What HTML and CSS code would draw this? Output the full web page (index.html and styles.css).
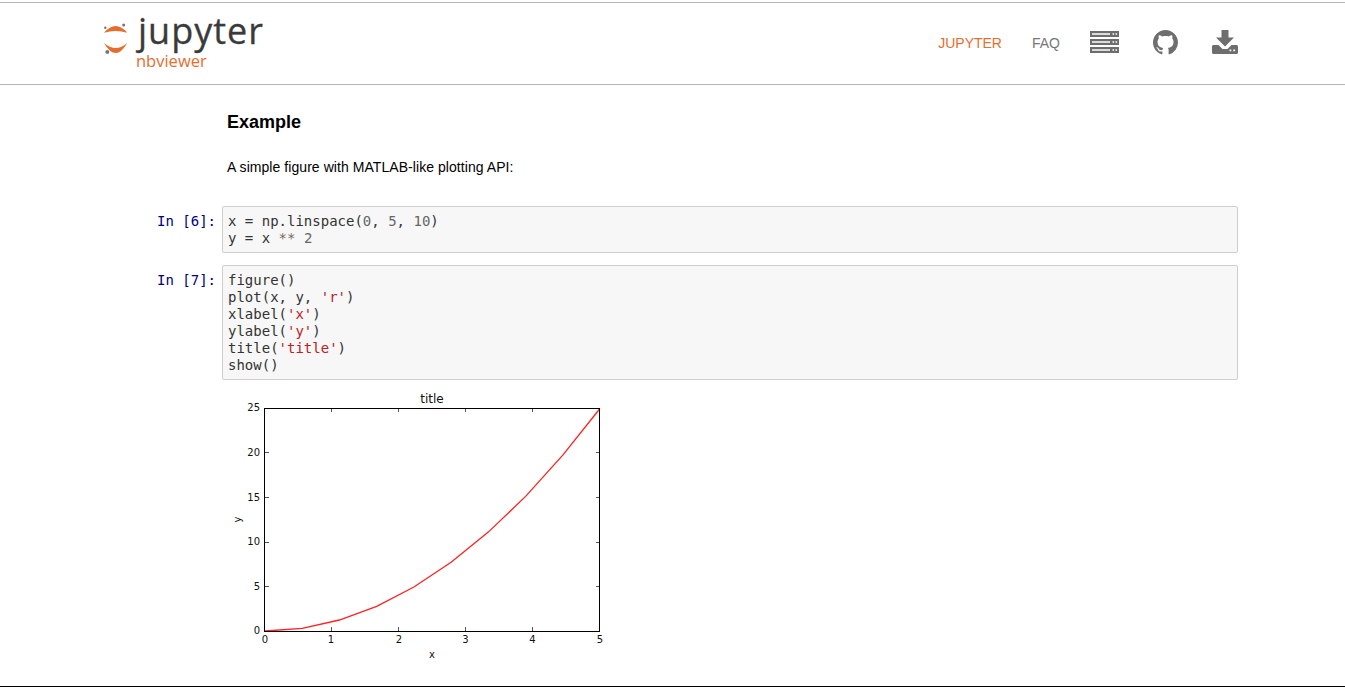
FILE: index.html
```html
<!DOCTYPE html>
<html lang="en">
<head>
<meta charset="utf-8">
<title>Example</title>
<link rel="stylesheet" href="styles.css">
</head>
<body>
<div class="topline"></div>
<header class="navbar">
  <a class="brand">
    <svg class="brand-mark" width="26" height="36" viewBox="0 0 26 36">
      <path d="M1 11.700 Q12.650 -1.700 24.300 11.700 Q12.650 8.300 1 11.700Z" fill="#e46e2e"/>
      <path d="M1 22 Q12.650 42 24.300 22 Q12.650 32 1 22Z" fill="#e46e2e"/>
      <circle cx="20.700" cy="4" r="1.500" fill="#767677"/>
      <circle cx="2.300" cy="6.700" r="1.200" fill="#767677"/>
      <circle cx="4.300" cy="31" r="2" fill="#767677"/>
    </svg>
    <span class="brand-text">
      <span class="brand-name">jupyter</span>
      <span class="brand-sub">nbviewer</span>
    </span>
  </a>
  <nav class="nav">
    <a class="nav-link active">JUPYTER</a>
    <a class="nav-link">FAQ</a>
    <svg class="nav-icon" width="29" height="22" viewBox="0 0 29 22"><path fill="#6e6e6e" d="M0 0h29v6H0zM0 8h29v6H0zM0 16h29v6H0z"/><path fill="#fff" d="M2 2.300h18v1.500H2zM2 10.300h18v1.500H2zM2 18.300h18v1.500H2zM22.500 2.300h1.600v1.500h-1.600zM25.500 2.300h1.600v1.500h-1.600zM22.500 10.300h1.600v1.500h-1.600zM25.500 10.300h1.600v1.500h-1.600zM22.500 18.300h1.600v1.500h-1.600zM25.500 18.300h1.600v1.500h-1.600z"/></svg>
    <svg class="nav-icon" width="25" height="25" viewBox="0 0 16 16"><path fill="#6e6e6e" d="M8 0C3.580 0 0 3.580 0 8c0 3.540 2.290 6.530 5.470 7.590.4.070.55-.17.55-.38 0-.19-.01-.82-.01-1.490-2.010.37-2.530-.49-2.690-.94-.09-.23-.48-.94-.82-1.130-.28-.15-.68-.52-.01-.53.630-.01 1.080.58 1.230.82.720 1.210 1.870.87 2.330.66.070-.52.280-.87.510-1.070-1.780-.2-3.640-.89-3.640-3.950 0-.87.310-1.590.820-2.150-.08-.2-.36-1.020.08-2.120 0 0 .67-.21 2.200.82.640-.18 1.320-.27 2-.27s1.360.09 2 .27c1.530-1.040 2.200-.82 2.200-.82.440 1.100.16 1.920.08 2.120.51.560.820 1.270.820 2.150 0 3.070-1.870 3.750-3.650 3.950.29.250.54.730.54 1.480 0 1.070-.01 1.930-.01 2.200 0 .21.150.46.550.38A8.010 8.010 0 0 0 16 8c0-4.420-3.580-8-8-8z"/></svg>
    <svg class="nav-icon" width="26" height="24" viewBox="0 0 26 24"><path fill="#6e6e6e" d="M9.500 0h7v7.500h5.500l-9 9-9-9h5.500z"/><path fill="#6e6e6e" d="M1.500 15H6.500l4 4h5l4-4h5c.8 0 1.500.7 1.500 1.500v6c0 .8-.7 1.500-1.500 1.500h-23C.7 24 0 23.300 0 22.500v-6C0 15.700.7 15 1.500 15z"/><path fill="#fff" d="M17.500 19.500h1.800v1.800h-1.800zM21.300 19.500h1.800v1.800h-1.800z"/></svg>
  </nav>
</header>
<main class="notebook">
  <div class="text-cell">
    <h2 class="heading">Example</h2>
    <p class="para">A simple figure with MATLAB-like plotting API:</p>
  </div>
  <div class="cell">
    <div class="prompt">In&nbsp;[6]:</div>
    <pre class="input">x = np.linspace(<span class="num">0</span>, <span class="num">5</span>, <span class="num">10</span>)
y = x <span class="op">**</span> <span class="num">2</span></pre>
  </div>
  <div class="cell">
    <div class="prompt">In&nbsp;[7]:</div>
    <pre class="input">figure()
plot(x, y, <span class="str">'r'</span>)
xlabel(<span class="str">'x'</span>)
ylabel(<span class="str">'y'</span>)
title(<span class="str">'title'</span>)
show()</pre>
  </div>
  <div class="output">
    <svg class="plot" width="384" height="280" viewBox="0 0 384 280">
      <g class="ticks">
        <path d="M110.500 20v4M177.500 20v4M244.500 20v4M311.500 20v4M110.500 243v-4M177.500 243v-4M244.500 243v-4M311.500 243v-4"/>
        <path d="M379 64.500h-4M379 109.500h-4M379 154.500h-4M379 198.500h-4M44 64.500h4M44 109.500h4M44 154.500h4M44 198.500h4"/>
      </g>
      <polyline class="curve" points="44,243 81.200,240.300 118.400,232 155.700,218.300 192.900,199 230.100,174.300 267.300,144.100 304.600,108.400 341.800,67.200 379,20.500"/>
      <rect class="frame" x="43.500" y="20.500" width="335" height="223"/>
      <text class="tick-label" x="44" y="255" text-anchor="middle">0</text>
      <text class="tick-label" x="110" y="255" text-anchor="middle">1</text>
      <text class="tick-label" x="178" y="255" text-anchor="middle">2</text>
      <text class="tick-label" x="244.500" y="255" text-anchor="middle">3</text>
      <text class="tick-label" x="311.500" y="255" text-anchor="middle">4</text>
      <text class="tick-label" x="379" y="255" text-anchor="middle">5</text>
      <text class="tick-label" x="39" y="246" text-anchor="end">0</text>
      <text class="tick-label" x="39" y="202" text-anchor="end">5</text>
      <text class="tick-label" x="39" y="157" text-anchor="end">10</text>
      <text class="tick-label" x="39" y="113" text-anchor="end">15</text>
      <text class="tick-label" x="39" y="68" text-anchor="end">20</text>
      <text class="tick-label" x="39" y="23" text-anchor="end">25</text>
      <text class="tick-label" x="211" y="270" text-anchor="middle">x</text>
      <text class="tick-label" x="20" y="131.500" text-anchor="middle" transform="rotate(-90 20 131.500)">y</text>
      <text class="plot-title" x="211" y="15" text-anchor="middle">title</text>
    </svg>
  </div>
</main>
<div class="bottomline"></div>
</body>
</html>
```
FILE: styles.css
```css
html, body { margin: 0; padding: 0; background: #fff; height: 100%; }
body { height: 687px; overflow: hidden; display: flex; flex-direction: column; font-family: "Liberation Sans", Arial, sans-serif; color: #000; }
.topline { height: 2px; border-bottom: 1px solid #b5b5b5; flex: none; }
.navbar { flex: none; height: 81px; border-bottom: 1px solid #b5b5b5; display: flex; justify-content: space-between; align-items: flex-start; padding: 0 107px 0 103px; }
.brand { display: flex; align-items: flex-start; }
.brand-mark { margin-top: 18px; }
.brand-text { display: flex; flex-direction: column; margin-left: 7px; }
.brand-name { font-family: "Open Sans", sans-serif; font-size: 36px; line-height: 40px; color: #3a3a3a; margin: 8px 0 0 2px; letter-spacing: 1px; -webkit-text-stroke: 0.300px #3a3a3a; }
.brand-sub { font-family: "Open Sans", sans-serif; font-size: 16.500px; line-height: 20px; color: #e46e2e; }
.nav { display: flex; align-items: center; height: 78px; }
.nav-link { font-size: 14px; color: #777; margin-right: 30px; padding-top: 1px; }
.nav-link.active { color: #e46e2e; }
.nav-icon { margin-right: 34px; }
.nav-icon:last-child { margin-right: 0; }
.notebook { flex: 1; display: flex; flex-direction: column; padding: 0 107px 0 157px; }
.text-cell { padding-left: 70px; }
.heading { font-size: 18px; line-height: 20px; font-weight: 700; margin: 27px 0 0; }
.para { font-size: 14px; line-height: 20px; margin: 25px 0 0; letter-spacing: 0.06px; }
.cell { display: flex; margin-top: 12px; }
.text-cell + .cell { margin-top: 29px; }
.prompt { width: 65px; flex: none; font-family: "DejaVu Sans Mono", monospace; font-size: 14px; line-height: 17px; color: #000080; padding-top: 7px; white-space: nowrap; }
.input { flex: 1; margin: 0; font-family: "DejaVu Sans Mono", monospace; font-size: 14px; line-height: 17px; color: #333; background: #f7f7f7; border: 1px solid #cfcfcf; border-radius: 2px; padding: 6px 5px 5px; }
.num { color: #666; }
.op { color: #7a6a5a; }
.str { color: #ba2121; }
.output { margin: 8px 0 0 64px; }
.plot { display: block; }
.ticks { fill: none; stroke: #555; stroke-width: 1; }
.curve { fill: none; stroke: #ff2020; stroke-width: 1.300; }
.frame { fill: none; stroke: #000; stroke-width: 1; }
.tick-label { font-family: "DejaVu Sans", sans-serif; font-size: 10px; fill: #111; }
.plot-title { font-family: "DejaVu Sans", sans-serif; font-size: 12px; fill: #111; }
.bottomline { flex: none; height: 1px; background: #000; }
```
